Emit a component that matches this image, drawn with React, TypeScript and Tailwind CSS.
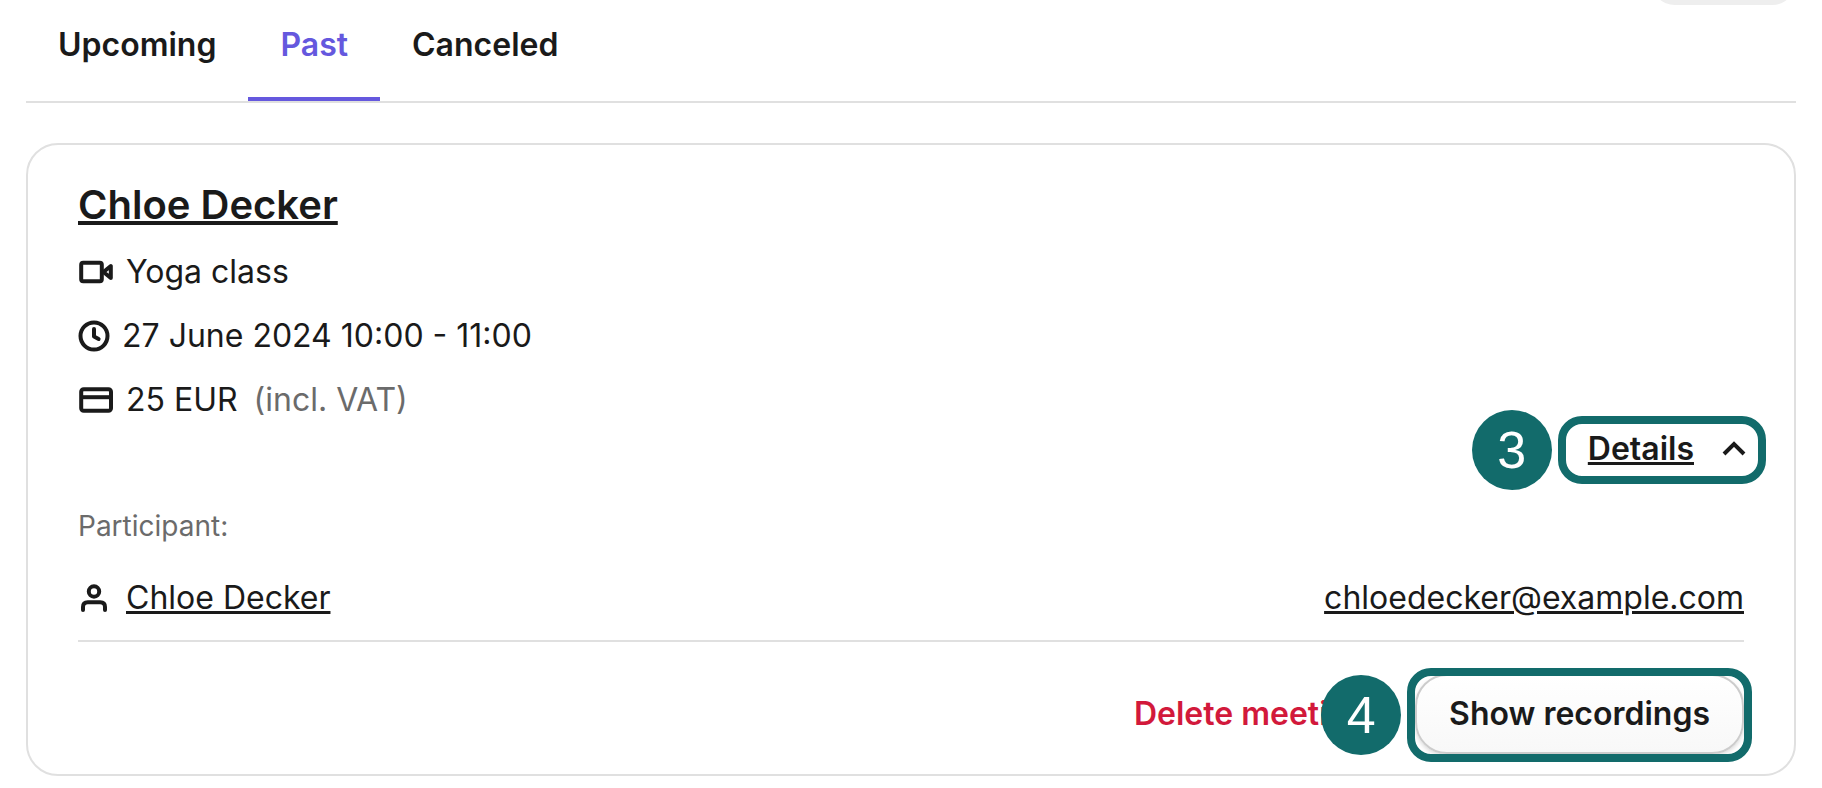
import type { ReactNode } from "react";

const tabs = ["Upcoming", "Past", "Canceled"];
const activeTab = "Past";

function VideoIcon() {
  return (
    <svg className="w-9 h-9 shrink-0" viewBox="0 0 36 36" fill="none" stroke="currentColor" strokeWidth={4} strokeLinejoin="round" aria-hidden="true">
      <rect x="3.2" y="8.8" width="20.6" height="18.4" rx="2" />
      <path strokeWidth={4} d="M25.5 18L32.8 12v12z" />
    </svg>
  );
}

function ClockIcon() {
  return (
    <svg className="w-8 h-8 shrink-0" viewBox="0 0 32 32" fill="none" stroke="currentColor" strokeWidth={4} strokeLinecap="round" strokeLinejoin="round" aria-hidden="true">
      <circle cx="16" cy="16" r="13.5" />
      <path d="M16 9v7.6l4.6 2.4" />
    </svg>
  );
}

function CardIcon() {
  return (
    <svg className="w-9 h-9 shrink-0" viewBox="0 0 36 36" fill="none" stroke="currentColor" strokeWidth={4} strokeLinejoin="round" aria-hidden="true">
      <rect x="3.2" y="7.2" width="29.8" height="21.6" rx="2.5" />
      <path d="M3 15.2h30" />
    </svg>
  );
}

function UserIcon() {
  return (
    <svg className="w-9 h-9 shrink-0" viewBox="0 0 36 36" fill="none" stroke="currentColor" strokeWidth={4} strokeLinecap="round" strokeLinejoin="round" aria-hidden="true">
      <circle cx="16" cy="11.5" r="5.2" />
      <path d="M5 30v-3q0-4.8 4.8-4.8h12.4q4.8 0 4.8 4.8v3" />
    </svg>
  );
}

function StepBadge({ children }: { children: ReactNode }) {
  return (
    <span className="w-20 h-20 rounded-full bg-[#126b6b] text-white font-['Liberation_Sans',sans-serif] text-[52px] flex items-center justify-center">
      {children}
    </span>
  );
}

export default function App() {
  return (
    <div className="bg-white text-[#1a1a1a] font-['Inter',sans-serif] text-[32px] leading-[48px] px-[26px] pb-3">
      {/* Bottom edge of the toolbar button */}
      <div className="h-[5px] overflow-hidden flex items-end justify-end">
        <button type="button" aria-label="Filter" className="w-[145px] h-20 shrink-0 rounded-3xl bg-[#eeeeee]" />
      </div>

      {/* Tabs */}
      <div role="tablist" className="flex border-b-2 border-[#e0e0e0] pt-4">
        {tabs.map((tab) => (
          <button
            key={tab}
            type="button"
            role="tab"
            aria-selected={tab === activeTab}
            className={
              tab === activeTab
                ? "px-8 pb-7 font-semibold border-b-4 border-[#6558de] text-[#6558de]"
                : "px-8 pb-7 font-semibold border-b-4 border-transparent"
            }
          >
            {tab}
          </button>
        ))}
      </div>

      {/* Meeting card */}
      <article className="mt-10 border-2 border-[#e0e0e0] rounded-[32px] px-[50px] pt-8 pb-5">
        <h2 className="text-[40px] leading-[56px] font-semibold">
          <a href="#client" className="underline decoration-4 underline-offset-2">Chloe Decker</a>
        </h2>

        <ul className="mt-[15px] space-y-4">
          <li className="flex items-center gap-3">
            <VideoIcon />
            Yoga class
          </li>
          <li className="flex items-center gap-3">
            <ClockIcon />
            27 June 2024 10:00 - 11:00
          </li>
          <li className="flex items-center gap-3">
            <CardIcon />
            <span>25 EUR</span>
            <span className="ml-1 text-[#6b6b6b]">(incl. VAT)</span>
          </li>
        </ul>

        <div className="mt-px -mr-[6px] flex justify-end">
          <div className="relative">
            <button type="button" aria-expanded="true" className="flex items-center gap-6 font-semibold">
              <span className="underline decoration-[3px] underline-offset-2">Details</span>
              <svg className="w-8 h-8" viewBox="0 0 32 32" fill="none" stroke="currentColor" strokeWidth={4} aria-hidden="true">
                <path d="M6 21l10-10 10 10" />
              </svg>
            </button>
            <div className="pointer-events-none absolute -left-[30px] -right-4 -top-[9px] -bottom-[11px] border-8 border-[#126b6b] rounded-3xl" />
            <div className="absolute right-full -top-[15px] mr-9">
              <StepBadge>3</StepBadge>
            </div>
          </div>
        </div>

        <p className="mt-[33px] text-[28px] leading-10 text-[#6b6b6b]">Participant:</p>
        <div className="mt-7 pb-[18px] flex items-center justify-between border-b-2 border-[#e0e0e0]">
          <div className="flex items-center gap-3">
            <UserIcon />
            <a href="#client" className="underline decoration-[3px] underline-offset-2">Chloe Decker</a>
          </div>
          <a href="mailto:chloedecker@example.com" className="underline decoration-[3px] underline-offset-2">
            chloedecker@example.com
          </a>
        </div>

        <div className="mt-8 flex items-center justify-end gap-12">
          <button type="button" className="font-semibold text-[#d2193b]">Delete meeting</button>
          <div className="relative">
            <button
              type="button"
              className="block h-20 px-8 rounded-[32px] border-2 border-[#cccccc] bg-linear-to-b from-white to-[#f8f8f8] shadow-[0_2px_4px_rgba(0,0,0,0.15)] font-semibold"
            >
              Show recordings
            </button>
            <div className="pointer-events-none absolute -inset-x-2 -top-[6px] -bottom-2 border-8 border-[#126b6b] rounded-3xl" />
            <div className="absolute right-full top-px mr-[14px]">
              <StepBadge>4</StepBadge>
            </div>
          </div>
        </div>
      </article>
    </div>
  );
}
